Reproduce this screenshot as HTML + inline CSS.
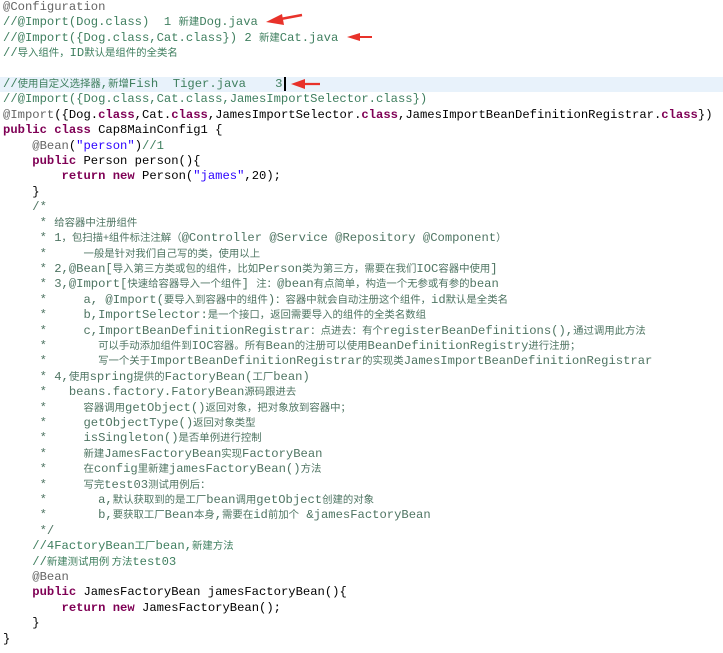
<!DOCTYPE html>
<html><head><meta charset="utf-8">
<style>
html,body{margin:0;padding:0;background:#fff;width:723px;height:653px;overflow:hidden;position:relative}
pre{margin:0;position:absolute;left:3px;top:0px;font-family:"Liberation Mono",monospace;font-size:12.2px;line-height:15.4px;color:#000;white-space:pre}
.k{color:#7f0055;font-weight:bold}
.s{color:#2a00ff}
.a{color:#646464}
.c{color:#3f7f5f}
.j{color:#4f7563}
i{font-style:normal;font-family:"Noto Sans CJK SC","WenQuanYi Zen Hei",sans-serif;font-size:10.4px;line-height:0;vertical-align:baseline}
.hl{position:absolute;left:0;top:77px;width:723px;height:15px;background:#e8f2fb}
.cur{position:absolute;left:284px;top:77px;width:1.5px;height:14px;background:#000}
svg{position:absolute;left:0;top:0}
</style></head><body>
<div class="hl"></div>
<pre><span class="a">@Configuration</span>
<span class="c">//@Import(Dog.class)  1 <i>新建</i>Dog.java</span>
<span class="c">//@Import({Dog.class,Cat.class}) 2 <i>新建</i>Cat.java</span>
<span class="c">//<i>导入组件，</i>ID<i>默认是组件的全类名</i></span>

<span class="c">//<i>使用自定义选择器</i>,<i>新增</i>Fish  Tiger.java    3</span>
<span class="c">//@Import({Dog.class,Cat.class,JamesImportSelector.class})</span>
<span class="a">@Import</span>({Dog.<span class="k">class</span>,Cat.<span class="k">class</span>,JamesImportSelector.<span class="k">class</span>,JamesImportBeanDefinitionRegistrar.<span class="k">class</span>})
<span class="k">public</span> <span class="k">class</span> Cap8MainConfig1 {
    <span class="a">@Bean</span>(<span class="s">"person"</span>)<span class="c">//1</span>
    <span class="k">public</span> Person person(){
        <span class="k">return</span> <span class="k">new</span> Person(<span class="s">"james"</span>,20);
    }
<span class="j">    /*
     * <i>给容器中注册组件</i>
     * 1<i>，包扫描+组件标注注解（</i>@Controller @Service @Repository @Component<i>）</i>
     *     <i>一般是针对我们自己写的类，使用以上</i>
     * 2,@Bean[<i>导入第三方类或包的组件，比如</i>Person<i>类为第三方，需要在我们</i>IOC<i>容器中使用</i>]
     * 3,@Import[<i>快速给容器导入一个组件</i>] <i>注：</i>@bean<i>有点简单，构造一个无参或有参的</i>bean
     *     a, @Import(<i>要导入到容器中的组件</i>)<i>：容器中就会自动注册这个组件，</i>id<i>默认是全类名</i>
     *     b,ImportSelector:<i>是一个接口，返回需要导入的组件的全类名数组</i>
     *     c,ImportBeanDefinitionRegistrar<i>：点进去：有个</i>registerBeanDefinitions(),<i>通过调用此方法</i>
     *       <i>可以手动添加组件到</i>IOC<i>容器。所有</i>Bean<i>的注册可以使用</i>BeanDefinitionRegistry<i>进行注册；</i>
     *       <i>写一个关于</i>ImportBeanDefinitionRegistrar<i>的实现类</i>JamesImportBeanDefinitionRegistrar
     * 4,<i>使用</i>spring<i>提供的</i>FactoryBean(<i>工厂</i>bean)
     *   beans.factory.FatoryBean<i>源码跟进去</i>
     *     <i>容器调用</i>getObject()<i>返回对象，把对象放到容器中；</i>
     *     getObjectType()<i>返回对象类型</i>
     *     isSingleton()<i>是否单例进行控制</i>
     *     <i>新建</i>JamesFactoryBean<i>实现</i>FactoryBean
     *     <i>在</i>config<i>里新建</i>jamesFactoryBean()<i>方法</i>
     *     <i>写完</i>test03<i>测试用例后：</i>
     *       a,<i>默认获取到的是工厂</i>bean<i>调用</i>getObject<i>创建的对象</i>
     *       b,<i>要获取工厂</i>Bean<i>本身</i>,<i>需要在</i>id<i>前加个</i> &amp;jamesFactoryBean
     */</span>
    <span class="c">//4FactoryBean<i>工厂</i>bean,<i>新建方法</i></span>
    <span class="c">//<i>新建测试用例 方法</i>test03</span>
    <span class="a">@Bean</span>
    <span class="k">public</span> JamesFactoryBean jamesFactoryBean(){
        <span class="k">return</span> <span class="k">new</span> JamesFactoryBean();
    }
}</pre>
<div class="cur"></div>
<svg width="723" height="653">
<g fill="#e8322a" stroke="#e8322a">
<line x1="278" y1="19.5" x2="302" y2="15" stroke-width="2.5"/>
<polygon points="266,22 282,14 284,25" stroke="none"/>
<line x1="358" y1="37" x2="372" y2="37" stroke-width="2"/>
<polygon points="347,37 360,33 360,41" stroke="none"/>
<line x1="302" y1="84" x2="320" y2="84" stroke-width="2.2"/>
<polygon points="291,84 305,79 305,89" stroke="none"/>
</g>
</svg>
</body></html>
